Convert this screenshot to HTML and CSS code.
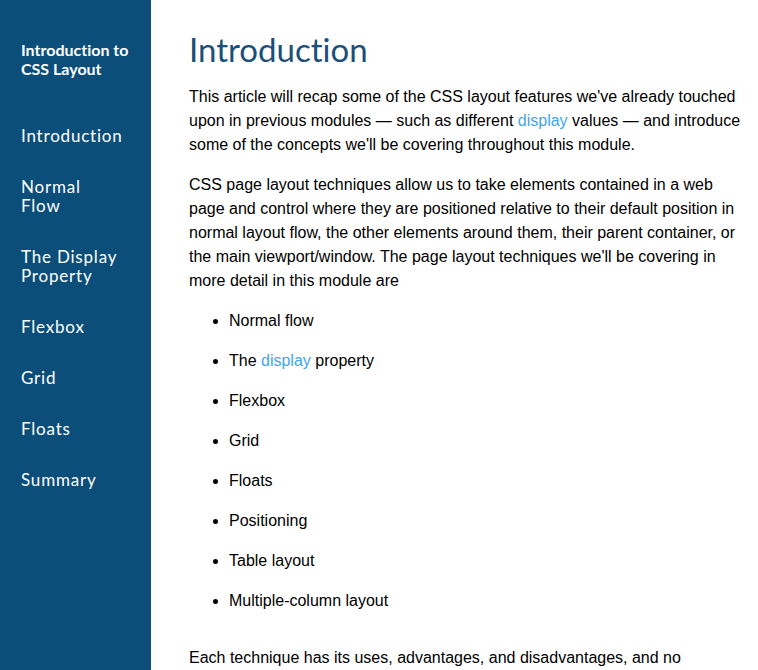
FILE: index.html
```html
<!DOCTYPE html>
<html lang="en">
<head>
<meta charset="utf-8">
<title>Introduction to CSS Layout</title>
<link rel="stylesheet" href="styles.css">
</head>
<body>
<div class="page">
  <nav class="sidebar">
    <div class="side-title">Introduction to CSS Layout</div>
    <ul class="nav">
      <li><a href="#">Introduction</a></li>
      <li><a href="#">Normal<br>Flow</a></li>
      <li><a href="#">The Display<br>Property</a></li>
      <li><a href="#">Flexbox</a></li>
      <li><a href="#">Grid</a></li>
      <li><a href="#">Floats</a></li>
      <li><a href="#">Summary</a></li>
    </ul>
  </nav>
  <main class="content">
    <h1 class="title">Introduction</h1>
    <p>This article will recap some of the CSS layout features we've already touched upon in previous modules — such as different <a href="#">display</a> values — and introduce some of the concepts we'll be covering throughout this module.</p>
    <p>CSS page layout techniques allow us to take elements contained in a web page and control where they are positioned relative to their default position in normal layout flow, the other elements around them, their parent container, or the main viewport/window. The page layout techniques we'll be covering in more detail in this module are</p>
    <ul class="list">
      <li>Normal flow</li>
      <li>The <a href="#">display</a> property</li>
      <li>Flexbox</li>
      <li>Grid</li>
      <li>Floats</li>
      <li>Positioning</li>
      <li>Table layout</li>
      <li>Multiple-column layout</li>
    </ul>
    <p class="after">Each technique has its uses, advantages, and disadvantages, and no technique is designed to be used in isolation. By understanding what each layout method is designed for you'll be in a good position to understand which method is most appropriate for each task.</p>
  </main>
</div>
</body>
</html>
```
FILE: styles.css
```css
html, body {
  margin: 0;
  padding: 0;
  height: 100%;
  overflow: hidden;
}
body {
  font-family: "Liberation Sans", Arial, sans-serif;
  color: #000;
  background: #fff;
}
.page {
  display: flex;
  min-height: 670px;
}
.sidebar {
  width: 151px;
  flex: none;
  background: #0b4e7a;
  padding: 40px 0 0 21px;
  box-sizing: border-box;
  font-family: Lato, "Open Sans", sans-serif;
  font-variant-ligatures: none;
  color: #fff;
}
.side-title {
  font-size: 16px;
  font-weight: 700;
  line-height: 19px;
  letter-spacing: 0;
  width: 120px;
}
.nav {
  list-style: none;
  margin: 48px 0 0;
  padding: 0;
  display: flex;
  flex-direction: column;
  gap: 32px;
}
.nav a {
  display: block;
  color: #fff;
  text-decoration: none;
  font-size: 17px;
  line-height: 19px;
  letter-spacing: 0.8px;
}
.content {
  flex: 1;
  padding: 28px 10px 0 38px;
}
.title {
  font-family: Lato, "Open Sans", sans-serif;
  font-variant-ligatures: none;
  font-weight: 400;
  font-size: 33px;
  line-height: 42px;
  color: #1a4f7b;
  margin: 0 0 15px;
}
.content p {
  font-size: 16px;
  line-height: 24px;
  margin: 0 0 16px;
}
.content a {
  color: #3ea6ef;
  text-decoration: none;
}
.list {
  margin: 0 0 33px;
  padding: 0 0 0 40px;
  display: flex;
  flex-direction: column;
  gap: 16px;
  font-size: 16px;
  line-height: 24px;
}
.list li {
  margin: 0;
}
.after {
  margin-top: 0;
}
```
